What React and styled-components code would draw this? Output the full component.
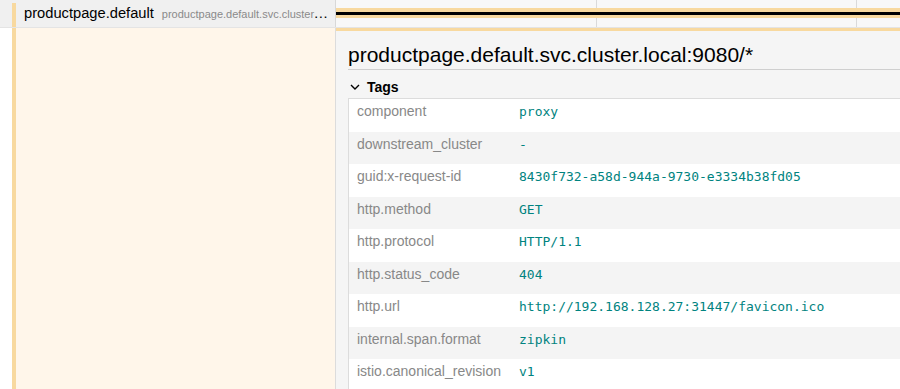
import React from 'react'
import styled, { createGlobalStyle } from 'styled-components'

const GlobalStyle = createGlobalStyle`
    html, body {
        margin: 0;
        padding: 0;
        background: #fff;
        overflow: hidden;
    }
    body {
        font-family: "Liberation Sans", Arial, sans-serif;
        color: #000;
    }
`

const SERVICE_COLOR = '#f8d99f'
const NAME_COL = 336

const Page = styled.div`
    width: 1376px;
    height: 389px;
    display: flex;
    flex-direction: column;
`

const SpanRow = styled.div`
    display: flex;
    height: 27px;
    border-bottom: 1px solid #e4e4e4;
`

const NameCol = styled.div`
    width: ${NAME_COL}px;
    flex: none;
    box-sizing: border-box;
    display: flex;
    background: #f0f0f0;
    border-right: 1px solid #d8d8d8;
    padding-left: 12px;
    min-width: 0;
`

const ServiceBar = styled.div`
    width: 4px;
    flex: none;
    margin-top: 3px;
    background: ${SERVICE_COLOR};
`

const Label = styled.div`
    flex: 1;
    padding: 4px 5px 0 8px;
    min-width: 0;
    font-size: 14.7px;
    line-height: 18px;
    white-space: nowrap;
    overflow: hidden;
    text-overflow: ellipsis;
`

const Endpoint = styled.span`
    margin-left: 8px;
    font-size: 11px;
    color: #8a8a8a;
`

const Timeline = styled.div`
    position: relative;
    flex: 1;
    background: #f8f8f8;
`

const Tick = styled.div`
    position: absolute;
    top: 0;
    bottom: 0;
    width: 1px;
    background: #dadada;
`

const SpanBar = styled.div`
    position: absolute;
    top: 8px;
    height: 10px;
    background: ${SERVICE_COLOR};
`

const CriticalLine = styled.div`
    position: absolute;
    left: 0;
    right: 0;
    top: 4px;
    height: 3px;
    background: #000;
`

const DetailRow = styled.div`
    flex: 1;
    display: flex;
    min-height: 0;
`

const DetailLeft = styled.div`
    width: ${NAME_COL}px;
    flex: none;
    box-sizing: border-box;
    display: flex;
    border-right: 1px solid #dcdcdc;
    padding-left: 12px;
`

const DetailBar = styled.div`
    width: 4px;
    background: ${SERVICE_COLOR};
`

const Cream = styled.div`
    flex: 1;
    background: #fff6ea;
`

const DetailPanel = styled.div`
    flex: 1;
    background: #f5f5f5;
    border-top: 3px solid ${SERVICE_COLOR};
    padding: 12px 0 0 12px;
    overflow: hidden;
`

const Title = styled.h2`
    margin: 0;
    font-size: 21px;
    font-weight: normal;
    line-height: 24px;
    padding-bottom: 2px;
    border-bottom: 1px solid #cfcfcf;
`

const SectionHeader = styled.div`
    display: flex;
    align-items: center;
    gap: 7px;
    padding: 7px 0 1px 2px;
    line-height: 20px;
    font-size: 14px;
    font-weight: bold;
`

const Table = styled.div`
    border: 1px solid #dcdcdc;
    border-right: none;
    background: #fff;
`

const Row = styled.div`
    display: flex;
    height: 32.5px;
    background: ${(p) => (p.$odd ? '#f4f4f4' : '#fff')};
`

const Key = styled.div`
    width: 162px;
    flex: none;
    box-sizing: border-box;
    padding: 4px 8px 0;
    font-size: 14px;
    line-height: 16px;
    color: #888;
    white-space: nowrap;
`

const Value = styled.div`
    padding: 5px 8px 0;
    font-family: "DejaVu Sans Mono", "Liberation Mono", monospace;
    font-size: 13px;
    line-height: 16px;
    color: #008380;
    white-space: pre;
`

const tags = [
    ['component', 'proxy'],
    ['downstream_cluster', '-'],
    ['guid:x-request-id', '8430f732-a58d-944a-9730-e3334b38fd05'],
    ['http.method', 'GET'],
    ['http.protocol', 'HTTP/1.1'],
    ['http.status_code', '404'],
    ['http.url', 'http://192.168.128.27:31447/favicon.ico'],
    ['internal.span.format', 'zipkin'],
    ['istio.canonical_revision', 'v1'],
]

const Chevron = () => (
    <svg width="10" height="7" viewBox="0 0 10 7">
        <polyline points="1,1 5,5 9,1" fill="none" stroke="#000" strokeWidth="1.4" />
    </svg>
)

export default function App() {
    return (
        <Page>
            <GlobalStyle />
            <SpanRow>
                <NameCol>
                    <ServiceBar />
                    <Label>
                        productpage.default
                        <Endpoint>productpage.default.svc.cluster.local:9080/*</Endpoint>
                    </Label>
                </NameCol>
                <Timeline>
                    {[0.25, 0.5, 0.75].map((t) => (
                        <Tick key={t} style={{ left: `${t * 100}%` }} />
                    ))}
                    <SpanBar style={{ left: 0, width: '100%' }}>
                        <CriticalLine />
                    </SpanBar>
                </Timeline>
            </SpanRow>
            <DetailRow>
                <DetailLeft>
                    <DetailBar />
                    <Cream />
                </DetailLeft>
                <DetailPanel>
                    <Title>productpage.default.svc.cluster.local:9080/*</Title>
                    <SectionHeader>
                        <Chevron />
                        Tags
                    </SectionHeader>
                    <Table>
                        {tags.map(([k, v], i) => (
                            <Row key={k} $odd={i % 2 === 1}>
                                <Key>{k}</Key>
                                <Value>{v}</Value>
                            </Row>
                        ))}
                    </Table>
                </DetailPanel>
            </DetailRow>
        </Page>
    )
}
